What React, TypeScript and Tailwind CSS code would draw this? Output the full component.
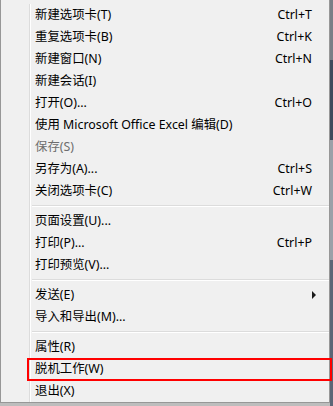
import React from 'react';

type Item =
  | { sep: true }
  | { label: string; key?: string; disabled?: boolean; sub?: boolean; marked?: boolean };

const items: Item[] = [
  { label: '新建选项卡(T)', key: 'Ctrl+T' },
  { label: '重复选项卡(B)', key: 'Ctrl+K' },
  { label: '新建窗口(N)', key: 'Ctrl+N' },
  { label: '新建会话(I)' },
  { label: '打开(O)...', key: 'Ctrl+O' },
  { label: '使用 Microsoft Office Excel 编辑(D)' },
  { label: '保存(S)', disabled: true },
  { label: '另存为(A)...', key: 'Ctrl+S' },
  { label: '关闭选项卡(C)', key: 'Ctrl+W' },
  { sep: true },
  { label: '页面设置(U)...' },
  { label: '打印(P)...', key: 'Ctrl+P' },
  { label: '打印预览(V)...' },
  { sep: true },
  { label: '发送(E)', sub: true },
  { label: '导入和导出(M)...' },
  { sep: true },
  { label: '属性(R)' },
  { label: '脱机工作(W)', marked: true },
  { label: '退出(X)' },
];

const App = () => {
  return (
    <div
      className="flex w-[333px] h-[406px] bg-[#d9d9d9] overflow-hidden"
      style={{ fontFamily: '"Noto Sans", "Noto Sans CJK SC", sans-serif' }}
    >
      <div className="flex flex-col w-[330px] h-[406px]">
        <div className="flex w-[330px] h-[403px] bg-[#f0f0f0] border-l border-r border-b border-[#979797] pt-[4px]">
          {/* gutter */}
          <div className="w-[29px] shrink-0 border-r border-[#dcdcdc]" />
          <div className="w-px shrink-0 bg-white" />
          <div className="flex-1 flex flex-col">
            {items.map((it, i) =>
              'sep' in it ? (
                <div key={i} className="h-[8px] flex flex-col justify-center">
                  <div className="h-px bg-[#dcdcdc] ml-[1px]" />
                  <div className="h-px bg-white ml-[1px]" />
                </div>
              ) : (
                <div
                  key={i}
                  className={`relative h-[22px] flex items-center pl-[4px] pr-[17px] text-[12.4px] ${
                    it.disabled ? 'text-[#6d6d6d]' : 'text-black'
                  }`}
                >
                  <span className="flex-1 whitespace-nowrap">{it.label}</span>
                  {it.key && <span className="whitespace-nowrap">{it.key}</span>}
                  {it.sub && (
                    <svg width="5" height="8" viewBox="0 0 5 8" className="mr-[-5px]">
                      <path d="M0 0 L4 4 L0 8 Z" fill="#1a1a1a" />
                    </svg>
                  )}
                  {it.marked && (
                    <div className="absolute left-[-4px] right-[-3px] top-0 h-[23px] border-2 border-[#ff0000] pointer-events-none" />
                  )}
                </div>
              )
            )}
          </div>
        </div>
        <div className="h-[3px] bg-[#bdbdbd]" />
      </div>
      <div className="flex-1 flex flex-col">
        <div className="h-[60px] bg-[#7a7f86]" />
        <div className="h-[80px] bg-[#3d4a5c]" />
        <div className="h-[120px] bg-[#9aa0a8]" />
        <div className="flex-1 bg-[#5b6677]" />
      </div>
    </div>
  );
};

export default App;
